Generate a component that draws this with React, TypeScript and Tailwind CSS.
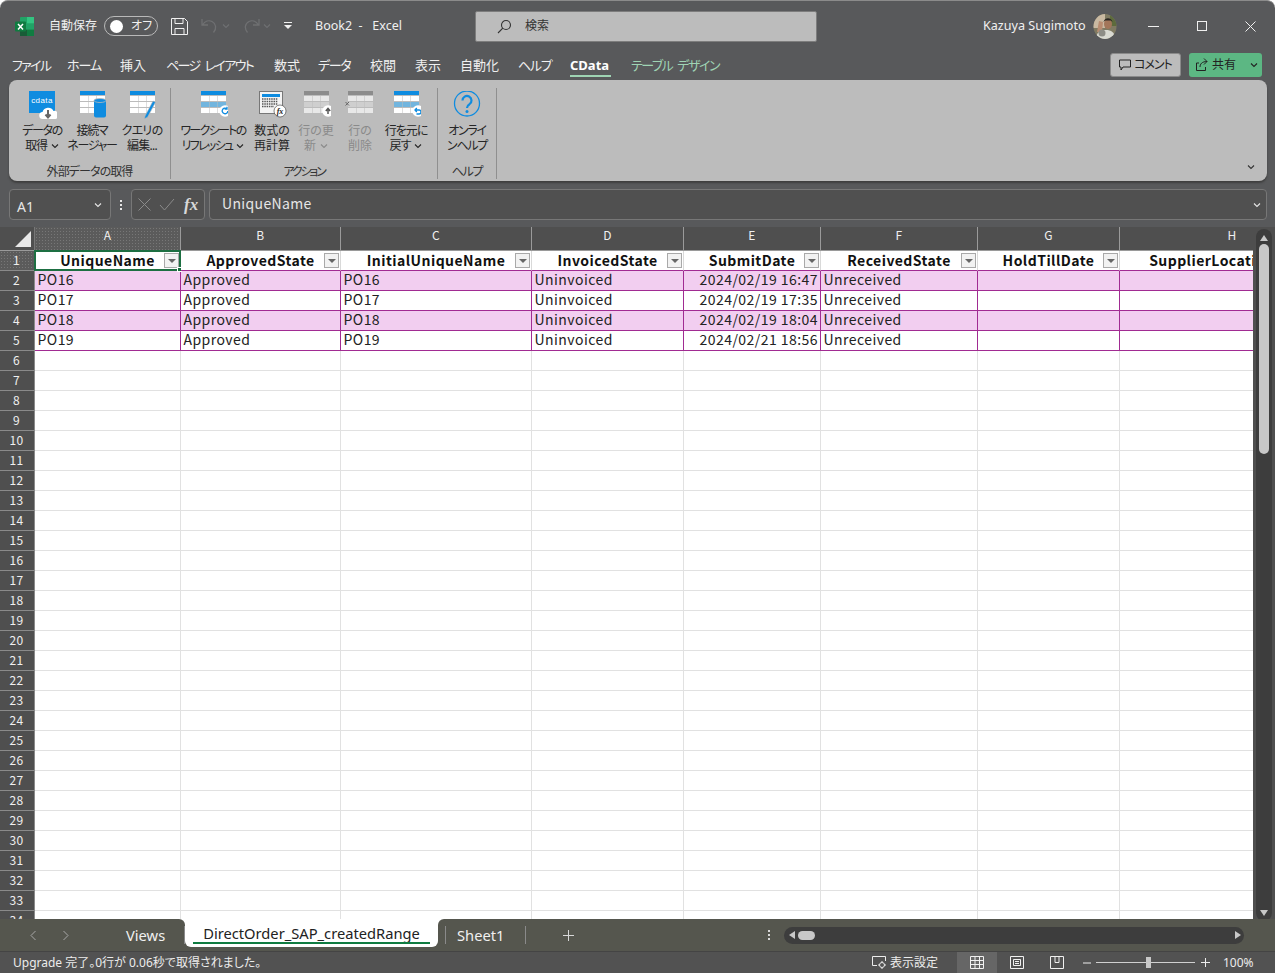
import React from 'react';

const jp = "font-['Noto_Sans','Noto_Sans_CJK_JP',sans-serif] [font-feature-settings:'palt']";

const tabs: [string, number, string][] = [
  ['ファイル', 55, 'tracking-[-1.7px]'],
  ['ホーム', 53, 'tracking-[-1px]'],
  ['挿入', 46, ''],
  ['ページ レイアウト', 108, 'tracking-[-1.6px] [word-spacing:3px]'],
  ['数式', 44, ''],
  ['データ', 52, 'tracking-[-1.3px]'],
  ['校閲', 45, ''],
  ['表示', 45, ''],
  ['自動化', 58, ''],
  ['ヘルプ', 52, 'tracking-[-1.3px]'],
];

const columns = [
  { id: 'A', title: 'UniqueName', width: 'w-[146px]' },
  { id: 'B', title: 'ApprovedState', width: 'w-[160px]' },
  { id: 'C', title: 'InitialUniqueName', width: 'w-[191px]' },
  { id: 'D', title: 'InvoicedState', width: 'w-[152px]' },
  { id: 'E', title: 'SubmitDate', width: 'w-[137px]' },
  { id: 'F', title: 'ReceivedState', width: 'w-[157px]' },
  { id: 'G', title: 'HoldTillDate', width: 'w-[142px]' },
  { id: 'H', title: 'SupplierLocationName', width: 'w-[225px]' },
];

const rows = [
  ['PO16', 'Approved', 'PO16', 'Uninvoiced', '2024/02/19 16:47', 'Unreceived', '', ''],
  ['PO17', 'Approved', 'PO17', 'Uninvoiced', '2024/02/19 17:35', 'Unreceived', '', ''],
  ['PO18', 'Approved', 'PO18', 'Uninvoiced', '2024/02/19 18:04', 'Unreceived', '', ''],
  ['PO19', 'Approved', 'PO19', 'Uninvoiced', '2024/02/21 18:56', 'Unreceived', '', ''],
];

const emptyRows = Array.from({ length: 29 }, (_, i) => i + 6);

const dotted = 'bg-[#5b5b5b] bg-[radial-gradient(#777777_1px,transparent_1px)] bg-[length:3px_3px]';

function Sheet({ head = '#0f8ce0', band = '#ffffff', cell = '#ffffff' }: { head?: string; band?: string; cell?: string }) {
  return (
    <g>
      <rect x="0" y="0" width="25" height="4" fill={head} />
      {[5, 11, 17].map((y, r) =>
        [0, 8.5, 17].map((x) => (
          <rect key={`${x}-${y}`} x={x} y={y} width="8" height="5" fill={r === 1 ? band : cell} />
        )),
      )}
    </g>
  );
}

function Badge({ children }: { children: React.ReactNode }) {
  return (
    <g transform="translate(18,14)">
      <circle cx="6" cy="6" r="5.800" fill="#ffffff" />
      {children}
    </g>
  );
}

function DataIcon() {
  return (
    <svg width="30" height="30" viewBox="0 0 30 30">
      <rect x="2" y="0" width="26" height="22" fill="#0f8ce0" />
      <text x="15" y="12" fontSize="8" letterSpacing=".4" fill="#ffffff" textAnchor="middle" fontFamily="Liberation Sans">
        cdata
      </text>
      <path d="M16 28a3.500 3.500 0 0 1-.5-7 6 6 0 0 1 11-1 4 4 0 0 1 2 8z" fill="#ffffff" />
      <path d="M21 19v6M18.500 23.500l2.500 3 2.500-3" stroke="#666" strokeWidth="2" fill="none" />
    </svg>
  );
}

function ConnIcon() {
  return (
    <svg width="30" height="30" viewBox="0 0 30 30">
      <g transform="translate(3,0)">
        <Sheet head="#0f8ce0" />
      </g>
      <path d="M17 9.500h12v15a2 2 0 0 1-2 2h-8a2 2 0 0 1-2-2z" fill="#0f8ce0" />
      <ellipse cx="23" cy="9.500" rx="6" ry="2" fill="#0f8ce0" stroke="#bbbbbb" strokeWidth=".8" />
    </svg>
  );
}

function QueryIcon() {
  return (
    <svg width="30" height="30" viewBox="0 0 30 30">
      <g transform="translate(3,0)">
        <Sheet />
      </g>
      <path d="M18 25l8-15 2.500 1.300-8 15-3 1.500z" fill="#0f8ce0" stroke="#bbbbbb" strokeWidth=".6" />
    </svg>
  );
}

function SheetBadgeIcon({ kind, muted }: { kind: 'refresh' | 'up' | 'undo'; muted?: boolean }) {
  return (
    <svg width="30" height="30" viewBox="0 0 30 30">
      <g transform="translate(3,0)">
        <Sheet head={muted ? '#8c8c8c' : '#0f8ce0'} band={muted ? '#cfcfcf' : '#72b5de'} cell={muted ? '#e8e8e8' : '#ffffff'} />
        <Badge>
          {kind === 'refresh' && (
            <path d="M8.800 6a2.800 2.800 0 1 1-1-2.200M8 1.800v2.400H5.600" stroke="#0f8ce0" strokeWidth="1.300" fill="none" />
          )}
          {kind === 'up' && <path d="M6 9V4M3.800 6L6 3.500 8.200 6" stroke="#555" strokeWidth="1.500" fill="none" />}
          {kind === 'undo' && (
            <path d="M3 5h4a2 2 0 0 1 0 4H4.500M4.800 3L3 5l1.800 2" stroke="#0f8ce0" strokeWidth="1.300" fill="none" />
          )}
        </Badge>
      </g>
    </svg>
  );
}

function CalcIcon() {
  return (
    <svg width="30" height="30" viewBox="0 0 30 30">
      <rect x="2.500" y=".5" width="23" height="22" fill="#f4f4f4" stroke="#777" />
      <rect x="5" y="3" width="18" height="3" fill="#0f8ce0" />
      <path d="M5 8h16M5 10.500h16M5 13h16M5 15.500h12" stroke="#555" strokeWidth="1.300" strokeDasharray="1.500 .8" />
      <circle cx="23" cy="20" r="6" fill="#ffffff" stroke="#333" strokeWidth=".6" />
      <text x="23" y="23" fontSize="8" fontStyle="italic" fontWeight="700" textAnchor="middle" fontFamily="Liberation Serif" fill="#222">
        fx
      </text>
    </svg>
  );
}

function DeleteIcon() {
  return (
    <svg width="30" height="30" viewBox="0 0 30 30">
      <g transform="translate(3,0)">
        <Sheet head="#8c8c8c" band="#cfcfcf" cell="#e8e8e8" />
      </g>
      <path d="M0.500 11l3.500 3.500M4 11l-3.500 3.500" stroke="#666" strokeWidth="1" />
    </svg>
  );
}

function HelpIcon() {
  return (
    <svg width="30" height="30" viewBox="0 0 30 30">
      <circle cx="15" cy="12.500" r="12.500" fill="none" stroke="#0f8ce0" strokeWidth="1.300" />
      <path d="M10.500 9.500a4.500 4.500 0 1 1 7 3.700c-1.600 1-2.500 1.800-2.500 3.800" fill="none" stroke="#0f8ce0" strokeWidth="2.200" />
      <circle cx="15" cy="20.500" r="1.500" fill="#0f8ce0" />
    </svg>
  );
}

function Chevron({ className = '' }: { className?: string }) {
  return (
    <svg width="8" height="6" viewBox="0 0 8 6" className={className}>
      <path d="M1 1.500l3 3 3-3" fill="none" stroke="currentColor" strokeWidth="1.100" />
    </svg>
  );
}

function RibbonButton({
  width,
  icon,
  lines,
  muted,
  more,
  track = 'tracking-[-1.300px]',
}: {
  width: string;
  icon: React.ReactNode;
  lines: [string, string];
  muted?: boolean;
  more?: boolean;
  track?: string;
}) {
  return (
    <div className={`${width} flex flex-col items-center`}>
      <div className="mt-[3px] h-[29px] w-[30px]">{icon}</div>
      <div className={`mt-[3px] text-center text-[12px] leading-[15px] whitespace-nowrap ${track} ${muted ? 'text-[#8a8a8a]' : 'text-[#262626]'}`}>
        <div>{lines[0]}</div>
        <div className="flex items-center justify-center gap-[4px]">
          {lines[1]}
          {more && <Chevron />}
        </div>
      </div>
    </div>
  );
}

function RibbonGroup({ width, label, track, children }: { width: string; label: string; track: string; children: React.ReactNode }) {
  return (
    <div className={`${width} flex h-[91px] flex-col border-r border-[#8f8f8f]`}>
      <div className="flex flex-1">{children}</div>
      <div className={`text-center text-[12px] leading-[15px] text-[#333] ${track}`}>{label}</div>
    </div>
  );
}

function FilterButton() {
  return (
    <span className="absolute top-[2px] right-[1px] flex h-[15px] w-[15px] items-center justify-center border border-[#a9a9a9] bg-[#f2f2f2]">
      <span className="h-0 w-0 border-x-[4px] border-t-[4px] border-x-transparent border-t-[#666]" />
    </span>
  );
}

function RowHeader({ n, active }: { n: number; active?: boolean }) {
  return (
    <div
      className={`flex w-[35px] shrink-0 items-center justify-center border-r border-b border-[#8a8a8a] pr-[1px] pb-[2px] text-[12px] text-[#f0f0f0] ${
        active ? dotted : 'bg-[#4f4f4f]'
      }`}
    >
      {n}
    </div>
  );
}

export default function App() {
  return (
    <div className={`flex h-[973px] w-[1275px] flex-col overflow-hidden rounded-t-[8px] border-t border-[#8b8b8b] bg-[#58595b] ${jp}`}>
      {/* Title bar */}
      <div className="flex h-[44px] shrink-0 items-center pt-[6px] pl-[15px] text-[12px] text-[#f0f0f0]">
        <svg width="19" height="19" viewBox="0 0 19 19">
          <rect x="5" y="0" width="14" height="19" rx="1" fill="#21a366" />
          <rect x="12" y="0" width="7" height="6.300" fill="#33c481" />
          <rect x="12" y="12.600" width="7" height="6.400" fill="#107c41" />
          <rect x="5" y="12.600" width="7" height="6.400" fill="#185c37" />
          <rect x="0" y="4.500" width="11" height="10" rx="1" fill="#107c41" />
          <path d="M3 7l5 5.500M8 7l-5 5.500" stroke="#ffffff" strokeWidth="1.500" />
        </svg>
        <span className="ml-[15px] w-[48px] whitespace-nowrap">自動保存</span>
        <div className="ml-[7px] flex h-[20px] w-[54px] items-center rounded-full border border-[#b9b9b9] pl-[5px]">
          <span className="h-[13px] w-[13px] rounded-full bg-white" />
          <span className="ml-[8px]">オフ</span>
        </div>
        <svg width="17" height="17" viewBox="0 0 17 17" className="ml-[13px]" fill="none" stroke="#f0f0f0">
          <path d="M.5.500h13l3 3v13H.500zM4 .500v5h8v-5M4 16.500v-6h9v6" />
        </svg>
        <svg width="18" height="16" viewBox="0 0 18 16" className="ml-[13px]" fill="none" stroke="#6f7072" strokeWidth="1.300">
          <path d="M1 1v6h6M1.500 7C4 3 8 2 11 3.500c4 2 5 7 1.500 11" />
        </svg>
        <Chevron className="ml-[3px] text-[#6f7072]" />
        <svg width="18" height="16" viewBox="0 0 18 16" className="ml-[12px]" fill="none" stroke="#6f7072" strokeWidth="1.300">
          <path d="M17 1v6h-6M16.500 7C14 3 10 2 7 3.500c-4 2-5 7-1.500 11" />
        </svg>
        <Chevron className="ml-[3px] text-[#6f7072]" />
        <svg width="8" height="8" viewBox="0 0 8 8" className="ml-[13px]" fill="#f0f0f0">
          <path d="M0 0h8v1H0zM0 3h8L4 7z" />
        </svg>
        <span className="ml-[23px] w-[160px] whitespace-pre text-[12.500px]">Book2  -   Excel</span>
        <div className="flex h-[31px] w-[342px] items-center rounded-[2px] border border-[#7d7d7d] bg-[#bcbcbc] pl-[21px] text-[#333]">
          <svg width="15" height="15" viewBox="0 0 15 15" fill="none" stroke="#333" strokeWidth="1.100">
            <circle cx="9" cy="6" r="4.500" />
            <path d="M5.800 9.200L1 14" />
          </svg>
          <span className="ml-[13px]">検索</span>
        </div>
        <span className="ml-[166px] w-[102px] text-[12.600px] whitespace-nowrap">Kazuya Sugimoto</span>
        <svg width="24" height="25" viewBox="0 0 24 25" className="ml-[8px]">
          <defs>
            <clipPath id="avatar">
              <ellipse cx="12" cy="12.500" rx="11.500" ry="12.500" />
            </clipPath>
          </defs>
          <g clipPath="url(#avatar)">
            <rect width="24" height="25" fill="#7f7a62" />
            <rect width="12" height="14" fill="#c9b9a2" />
            <rect x="17" width="7" height="12" fill="#5d6b3c" />
            <path d="M3 25c0-7 5-9 10-9s9 2 9 9z" fill="#d9dad2" />
            <ellipse cx="15" cy="10" rx="4" ry="5" fill="#a3765a" />
            <path d="M10.500 8c1-5 8-5 9 0l-1.500-1.500h-6z" fill="#2a2622" />
            <path d="M4 18l2-11 4 1-1 10z" fill="#b98d72" />
            <circle cx="9" cy="19" r="3.500" fill="#8d8d86" />
          </g>
        </svg>
        <svg width="11" height="11" viewBox="0 0 11 11" className="ml-[31px]" stroke="#f0f0f0">
          <path d="M0 5.500h11" />
        </svg>
        <svg width="10" height="10" viewBox="0 0 10 10" className="ml-[38px]" stroke="#f0f0f0" fill="none">
          <rect x=".5" y=".5" width="9" height="9" />
        </svg>
        <svg width="11" height="11" viewBox="0 0 11 11" className="ml-[38px]" stroke="#f0f0f0">
          <path d="M.5.500l10 10M10.500.500l-10 10" />
        </svg>
      </div>

      {/* Ribbon tabs */}
      <div className="flex h-[35px] shrink-0 items-center pt-[6px] pl-[12px] text-[13px] text-[#f0f0f0]">
        {tabs.map(([label, w, track]) => (
          <span key={label} style={{ width: w }} className={`whitespace-nowrap ${track}`}>
            {label}
          </span>
        ))}
        <span className="relative w-[61px] font-bold text-white">
          CData
          <span className="absolute top-[19px] left-0 h-[2px] w-[41px] bg-[#9fd4b4]" />
        </span>
        <span className="w-[479px] whitespace-nowrap tracking-[-1.500px] text-[#9fd4b4] [word-spacing:3px]">テーブル デザイン</span>
        <div className="-mt-[2px] flex h-[24px] w-[71px] items-center justify-center gap-[3px] rounded-[3px] border border-[#8a8a8a] bg-[#bcbcbc] text-[12px] tracking-[-1px] text-[#222]">
          <svg width="12" height="12" viewBox="0 0 12 12" fill="none" stroke="#222">
            <path d="M.5 1h11v7H4L2 11V8H.500z" />
          </svg>
          コメント
        </div>
        <div className="-mt-[2px] ml-[8px] flex h-[24px] w-[73px] items-center rounded-[3px] bg-[#5cb783] pl-[7px] text-[12px] text-[#222]">
          <svg width="12" height="13" viewBox="0 0 12 13" fill="none" stroke="#222">
            <path d="M8 .500l3 3-3 3M11 3.500C6 3.500 4 6 4 9M3 5H.5v7.500h9V9" />
          </svg>
          <span className="ml-[4px] w-[36px]">共有</span>
          <Chevron className="ml-[2px]" />
        </div>
      </div>

      {/* Ribbon */}
      <div className="relative mx-[9px] flex h-[101px] w-[1258px] shrink-0 rounded-[8px] bg-[#bcbcbc] pt-[8px] shadow-[0_2px_2px_#3f3f3f]">
        <RibbonGroup width="w-[162px]" label="外部データの取得" track="tracking-[-.9px]">
          <div className="flex pl-[8px]">
            <RibbonButton width="w-[50px]" icon={<DataIcon />} lines={['データの', '取得']} more />
            <RibbonButton width="w-[50px]" icon={<ConnIcon />} lines={['接続マ', 'ネージャー']} />
            <RibbonButton width="w-[50px]" icon={<QueryIcon />} lines={['クエリの', '編集...']} track="tracking-[-.7px]" />
          </div>
        </RibbonGroup>
        <RibbonGroup width="w-[267px]" label="アクション" track="tracking-[-2.200px]">
          <div className="flex pl-[7px]">
            <RibbonButton width="w-[70px]" icon={<SheetBadgeIcon kind="refresh" />} lines={['ワークシートの', 'リフレッシュ']} more track="tracking-[-1.700px]" />
            <RibbonButton width="w-[48px]" icon={<CalcIcon />} lines={['数式の', '再計算']} track="" />
            <RibbonButton width="w-[40px]" icon={<SheetBadgeIcon kind="up" muted />} lines={['行の更', '新']} muted more track="" />
            <RibbonButton width="w-[48px]" icon={<DeleteIcon />} lines={['行の', '削除']} muted track="" />
            <RibbonButton width="w-[44px]" icon={<SheetBadgeIcon kind="undo" />} lines={['行を元に', '戻す']} more track="tracking-[-1px]" />
          </div>
        </RibbonGroup>
        <RibbonGroup width="w-[59px]" label="ヘルプ" track="tracking-[-1.300px]">
          <RibbonButton width="w-[59px]" icon={<HelpIcon />} lines={['オンライ', 'ンヘルプ']} />
        </RibbonGroup>
        <Chevron className="absolute right-[12px] bottom-[11px] text-[#333]" />
      </div>

      {/* Formula bar */}
      <div className="mt-[8px] flex h-[31px] shrink-0 items-stretch pl-[9px] text-[#e6e6e6]">
        <div className="flex w-[102px] items-center justify-between rounded-[4px] border border-[#777] bg-[#505050] pr-[8px] pl-[7px] text-[14px]">
          <span className="pt-[3px]">A1</span>
          <Chevron />
        </div>
        <div className="flex w-[20px] flex-col items-center justify-center gap-[2px]">
          <span className="h-[2px] w-[2px] bg-[#e6e6e6]" />
          <span className="h-[2px] w-[2px] bg-[#e6e6e6]" />
          <span className="h-[2px] w-[2px] bg-[#e6e6e6]" />
        </div>
        <div className="flex w-[74px] items-center rounded-[4px] border border-[#777] bg-[#505050] pl-[6px]">
          <svg width="13" height="13" viewBox="0 0 13 13" stroke="#8b8b8b">
            <path d="M.5.500l12 12M12.500.500l-12 12" />
          </svg>
          <svg width="16" height="13" viewBox="0 0 16 13" stroke="#8b8b8b" fill="none" className="ml-[8px]">
            <path d="M1 7l4.500 5L15 1" />
          </svg>
          <span className="ml-[9px] font-['Liberation_Serif',serif] text-[17px] font-bold text-[#d8d8d8] italic">fx</span>
        </div>
        <div className="ml-[4px] flex w-[1058px] items-center justify-between rounded-[4px] border border-[#777] bg-[#505050] pr-[5px] pl-[12px] text-[14px] tracking-[.35px]">
          <span className="pb-[2px] font-['Noto_Sans_CJK_JP',sans-serif]">UniqueName</span>
          <Chevron />
        </div>
      </div>

      {/* Sheet */}
      <div className="mt-[7px] flex min-h-0 flex-1 bg-[#4f4f4f]">
        <div className="flex w-[1253px] shrink-0 flex-col overflow-hidden font-['Noto_Sans_CJK_JP',sans-serif] text-[14px] leading-none tracking-[.45px] text-[#222] [font-feature-settings:'normal']">
          <div className="flex h-[24px] shrink-0 border-b border-[#9a9a9a]">
            <div className="flex w-[35px] shrink-0 items-end justify-end border-r border-[#777] pr-[3px] pb-[3px]">
              <span className="h-0 w-0 border-b-[16px] border-l-[16px] border-b-[#e8e8e8] border-l-transparent" />
            </div>
            {columns.map((c, i) => (
              <div
                key={c.id}
                className={`${c.width} flex shrink-0 justify-center border-r border-[#9a9a9a] pt-[2px] text-[12px] text-[#f0f0f0] ${
                  i === 0 ? dotted : ''
                }`}
              >
                {c.id}
              </div>
            ))}
          </div>
          <div className="flex h-[20px] shrink-0">
            <RowHeader n={1} active />
            {columns.map((c, i) => (
              <div
                key={c.id}
                className={`${c.width} relative flex shrink-0 items-center justify-center border-r border-b border-r-[#d9d9d9] border-b-[#a12b92] bg-white pb-[1px] font-bold whitespace-nowrap tracking-[.45px] text-[#111] ${
                  i === 7 ? 'pl-[2px]' : ''
                }`}
              >
                {c.title}
                {i < 7 && <FilterButton />}
                {i === 0 && (
                  <span className="absolute -inset-y-px -right-px -left-px border-2 border-[#1d6f42]">
                    <span className="absolute -right-[3px] -bottom-[3px] h-[5px] w-[5px] border border-white bg-[#1d6f42]" />
                  </span>
                )}
              </div>
            ))}
          </div>
          {rows.map((r, ri) => (
            <div key={ri} className="flex h-[20px] shrink-0">
              <RowHeader n={ri + 2} />
              {columns.map((c, ci) => (
                <div
                  key={c.id}
                  className={`${c.width} flex shrink-0 items-center border-r border-b border-[#a12b92] pr-[2px] pb-[3px] pl-[2.500px] whitespace-nowrap ${
                    ci === 4 ? 'justify-end' : ''
                  } ${ri % 2 === 0 ? 'bg-[#f2cef0]' : 'bg-white'}`}
                >
                  {r[ci]}
                </div>
              ))}
            </div>
          ))}
          {emptyRows.map((n) => (
            <div key={n} className="flex h-[20px] shrink-0">
              <RowHeader n={n} />
              {columns.map((c) => (
                <div key={c.id} className={`${c.width} shrink-0 border-r border-b border-[#e1e1e1] bg-white`} />
              ))}
            </div>
          ))}
        </div>
        <div className="flex w-[22px] shrink-0 justify-center pt-[2px] pr-[1px]">
          <div className="flex h-[692px] w-[16px] flex-col items-center rounded-full bg-[#3d3d3d] pt-[6px] pb-[5px]">
            <span className="h-0 w-0 border-x-[4px] border-b-[6px] border-x-transparent border-b-[#c8c8c8]" />
            <span className="mt-[3px] h-[210px] w-[10px] rounded-full bg-[#c8c8c8]" />
            <span className="mt-auto h-0 w-0 border-x-[4px] border-t-[6px] border-x-transparent border-t-[#c8c8c8]" />
          </div>
        </div>
      </div>

      {/* Sheet tabs */}
      <div className="flex h-[32px] shrink-0 bg-white text-[14.700px] text-[#f0f0f0]">
        <div className="flex w-[185px] shrink-0 items-center rounded-tr-[6px] bg-[#55564e]">
          <svg width="8" height="11" viewBox="0 0 8 11" className="ml-[29px]" fill="none" stroke="#a8a8a8">
            <path d="M6.500 1L2 5.500 6.500 10" />
          </svg>
          <svg width="8" height="11" viewBox="0 0 8 11" className="ml-[25px]" fill="none" stroke="#a8a8a8">
            <path d="M1.500 1L6 5.500 1.500 10" />
          </svg>
          <span className="ml-[56px] w-[58px] pt-[1px]">Views</span>
          <span className="h-[18px] w-px bg-[#8a8a8a]" />
        </div>
        <div className="w-[253px] shrink-0 bg-[#55564e]">
          <div className="relative flex h-[28px] justify-center rounded-b-[6px] bg-white text-[#222]">
            <span className="pt-[3px]">DirectOrder_SAP_createdRange</span>
            <span className="absolute right-[8px] bottom-[3px] left-[8px] h-[2px] bg-[#107c41]" />
          </div>
        </div>
        <div className="flex flex-1 items-center rounded-tl-[6px] bg-[#55564e]">
          <span className="ml-[7px] h-[18px] w-px bg-[#8a8a8a]" />
          <span className="ml-[11px] w-[68px] pt-[1px]">Sheet1</span>
          <span className="h-[18px] w-px bg-[#8a8a8a]" />
          <svg width="11" height="11" viewBox="0 0 11 11" className="ml-[37px]" stroke="#d8d8d8">
            <path d="M5.500 0v11M0 5.500h11" />
          </svg>
          <div className="ml-[194px] flex flex-col gap-[2px]">
            <span className="h-[2px] w-[2px] bg-[#d8d8d8]" />
            <span className="h-[2px] w-[2px] bg-[#d8d8d8]" />
            <span className="h-[2px] w-[2px] bg-[#d8d8d8]" />
          </div>
          <div className="ml-[14px] flex h-[17px] w-[460px] items-center rounded-full bg-[#3d3d3d] pr-[3px] pl-[5px]">
            <span className="h-0 w-0 border-y-[4px] border-r-[6px] border-y-transparent border-r-[#c8c8c8]" />
            <span className="ml-[3px] h-[9px] w-[17px] rounded-full bg-[#c8c8c8]" />
            <span className="ml-auto h-0 w-0 border-y-[4px] border-l-[6px] border-y-transparent border-l-[#c8c8c8]" />
          </div>
        </div>
      </div>

      {/* Status bar */}
      <div className="flex h-[22px] shrink-0 items-center border-t border-[#444] bg-[#525252] pl-[13px] text-[12px] text-[#ececec]">
        <span className="w-[859px] whitespace-nowrap">Upgrade 完了。0行が 0.06秒で取得されました。</span>
        <svg width="16" height="15" viewBox="0 0 16 15" fill="none" stroke="#ececec">
          <path d="M5 10.500H.5v-9h13V6" />
          <circle cx="10" cy="10" r="2.500" />
          <path d="M10 6v1.500M10 12.500V14M6 10h1.500M12.500 10H14" />
        </svg>
        <span className="ml-[2px] w-[67px] whitespace-nowrap">表示設定</span>
        <div className="flex h-[21px] w-[40px] items-center justify-center bg-[#666]">
          <svg width="14" height="13" viewBox="0 0 14 13" fill="none" stroke="#f0f0f0">
            <path d="M.5.500h13v12H.500zM5 .500v12M9.500.500v12M.5 4.500h13M.5 8.500h13" />
          </svg>
        </div>
        <svg width="14" height="13" viewBox="0 0 14 13" className="ml-[13px]" fill="none" stroke="#f0f0f0">
          <path d="M.5.500h13v12H.500zM3.500 3.500h7v6h-7zM5 5.500h4M5 7.500h4" />
        </svg>
        <svg width="14" height="13" viewBox="0 0 14 13" className="ml-[26px]" fill="none" stroke="#f0f0f0">
          <path d="M.5.500h13v12H.500zM5 .500v6h4v-6" />
        </svg>
        <svg width="8" height="8" viewBox="0 0 8 8" className="ml-[19px]" stroke="#ececec">
          <path d="M0 4h8" />
        </svg>
        <div className="relative ml-[5px] h-px w-[99px] bg-[#d0d0d0]">
          <span className="absolute -top-[5px] left-[50px] h-[11px] w-[5px] bg-[#c8c8c8]" />
        </div>
        <svg width="9" height="9" viewBox="0 0 9 9" className="ml-[6px]" stroke="#ececec">
          <path d="M0 4.500h9M4.500 0v9" />
        </svg>
        <span className="ml-[13px]">100%</span>
      </div>
    </div>
  );
}
